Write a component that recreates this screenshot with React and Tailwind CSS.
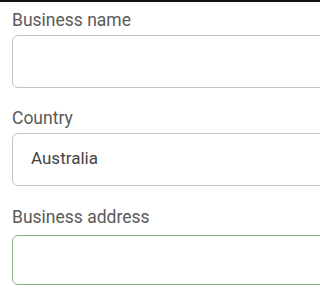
export default function App() {
  const fields = [
    { label: 'Business name', value: '', focused: false, gap: 'mt-[8px]', box: 'mt-[5px] h-[53px]' },
    { label: 'Country', value: 'Australia', focused: false, gap: 'mt-[20px]', box: 'mt-[5px] h-[53px]' },
    { label: 'Business address', value: '', focused: true, gap: 'mt-[21px]', box: 'mt-[8px] h-[50px]' },
  ];

  return (
    <div className="w-full h-[288px] overflow-hidden bg-white font-['Roboto','Liberation_Sans',sans-serif]">
      <div className="h-[1.5px] bg-[#111]"></div>
      <div className="pl-3 flex flex-col">
        {fields.map((f) => (
          <div key={f.label} className={f.gap}>
            <div className="text-[17.5px] leading-[20px] text-[#5a5a5a]">{f.label}</div>
            <div
              className={
                'w-[320px] rounded-[6px] flex items-center pl-[18px] text-[17px] text-[#444] ' +
                f.box +
                (f.focused ? ' border-[1.5px] border-[#86b67a]' : ' border-[1.5px] border-[#c4c4c4]')
              }
            >
              {f.value}
            </div>
          </div>
        ))}
      </div>
    </div>
  );
}
